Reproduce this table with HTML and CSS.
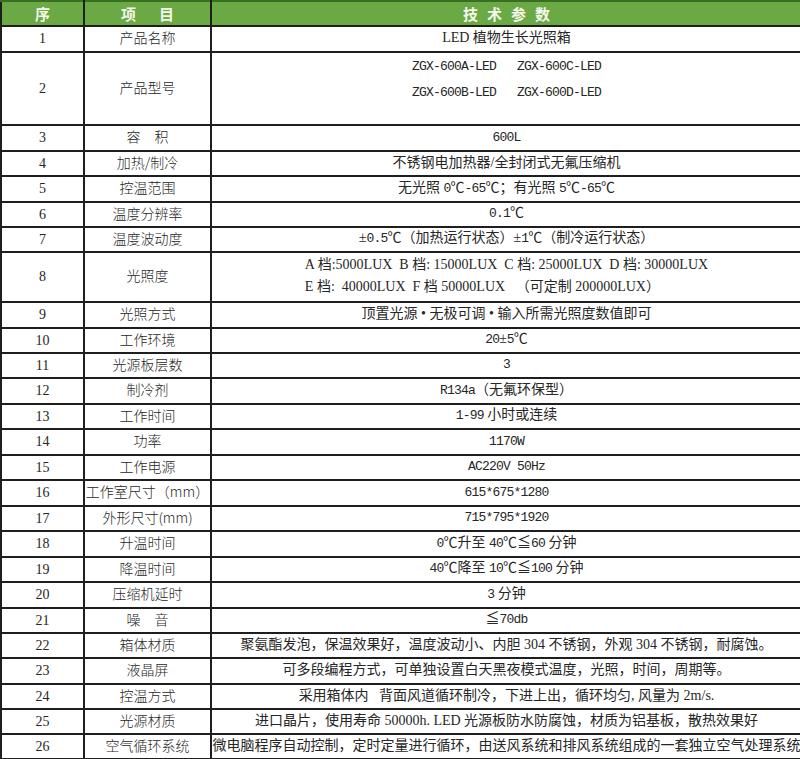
FILE: index.html
```html
<!DOCTYPE html>
<html lang="zh-CN">
<head>
<meta charset="utf-8">
<title>技术参数</title>
<link rel="stylesheet" href="styles.css">
</head>
<body>
<table class="spec">
  <colgroup>
    <col class="c-no">
    <col class="c-item">
    <col class="c-val">
  </colgroup>
  <thead>
    <tr class="h25">
      <th>序</th>
      <th class="item-h">项　目</th>
      <th class="wide">技术参数</th>
    </tr>
  </thead>
  <tbody>
    <tr class="h26"><td>1</td><td>产品名称</td><td>LED 植物生长光照箱</td></tr>
    <tr class="h73"><td>2</td><td>产品型号</td><td class="top"><span class="mono pre">ZGX-600A-LED   ZGX-600C-LED</span><br><span class="mono pre">ZGX-600B-LED   ZGX-600D-LED</span></td></tr>
    <tr class="h26"><td>3</td><td>容　积</td><td><span class="mono">600L</span></td></tr>
    <tr class="h25"><td>4</td><td>加热/制冷</td><td>不锈钢电加热器/全封闭式无氟压缩机</td></tr>
    <tr class="h26"><td>5</td><td>控温范围</td><td>无光照 <span class="mono">0</span>℃<span class="mono">-65</span>℃；有光照 <span class="mono">5</span>℃<span class="mono">-65</span>℃</td></tr>
    <tr class="h25"><td>6</td><td>温度分辨率</td><td><span class="mono">0.1</span>℃</td></tr>
    <tr class="h25"><td>7</td><td>温度波动度</td><td>±<span class="mono">0.5</span>℃（加热运行状态）±<span class="mono">1</span>℃（制冷运行状态）</td></tr>
    <tr class="h50"><td>8</td><td>光照度</td><td><div class="lux"><div class="pre">A 档:5000LUX  B 档: 15000LUX  C 档: 25000LUX  D 档: 30000LUX</div><div class="pre">E 档:  40000LUX  F 档 50000LUX   （可定制 200000LUX）</div></div></td></tr>
    <tr class="h26"><td>9</td><td>光照方式</td><td>顶置光源 • 无极可调 • 输入所需光照度数值即可</td></tr>
    <tr class="h25"><td>10</td><td>工作环境</td><td><span class="mono">20</span>±<span class="mono">5</span>℃</td></tr>
    <tr class="h25"><td>11</td><td>光源板层数</td><td><span class="mono">3</span></td></tr>
    <tr class="h26"><td>12</td><td>制冷剂</td><td><span class="mono">R134a</span>（无氟环保型）</td></tr>
    <tr class="h25"><td>13</td><td>工作时间</td><td><span class="mono">1-99</span> 小时或连续</td></tr>
    <tr class="h26"><td>14</td><td>功率</td><td><span class="mono">1170W</span></td></tr>
    <tr class="h25"><td>15</td><td>工作电源</td><td><span class="mono">AC220V 50Hz</span></td></tr>
    <tr class="h26"><td>16</td><td>工作室尺寸（mm）</td><td><span class="mono">615*675*1280</span></td></tr>
    <tr class="h25"><td>17</td><td>外形尺寸(mm)</td><td><span class="mono">715*795*1920</span></td></tr>
    <tr class="h26"><td>18</td><td>升温时间</td><td><span class="mono">0</span>℃升至 <span class="mono">40</span>℃≦<span class="mono">60</span> 分钟</td></tr>
    <tr class="h25"><td>19</td><td>降温时间</td><td><span class="mono">40</span>℃降至 <span class="mono">10</span>℃≦<span class="mono">100</span> 分钟</td></tr>
    <tr class="h26"><td>20</td><td>压缩机延时</td><td><span class="mono">3</span> 分钟</td></tr>
    <tr class="h25"><td>21</td><td>噪　音</td><td>≦<span class="mono">70db</span></td></tr>
    <tr class="h25"><td>22</td><td>箱体材质</td><td>聚氨酯发泡，保温效果好，温度波动小、内胆 304 不锈钢，外观 304 不锈钢，耐腐蚀。</td></tr>
    <tr class="h26"><td>23</td><td>液晶屏</td><td>可多段编程方式，可单独设置白天黑夜模式温度，光照，时间，周期等。</td></tr>
    <tr class="h25"><td>24</td><td>控温方式</td><td><span class="pre">采用箱体内   背面风道循环制冷，下进上出，循环均匀, 风量为 2m/s.</span></td></tr>
    <tr class="h25"><td>25</td><td>光源材质</td><td>进口晶片，使用寿命 50000h. LED 光源板防水防腐蚀，材质为铝基板，散热效果好</td></tr>
    <tr class="h25"><td>26</td><td>空气循环系统</td><td>微电脑程序自动控制，定时定量进行循环，由送风系统和排风系统组成的一套独立空气处理系统</td></tr>
  </tbody>
</table>
</body>
</html>
```

FILE: styles.css
```css
html, body {
  margin: 0;
  padding: 0;
  background: #ffffff;
}

body {
  font-family: "Liberation Serif", "Noto Sans CJK SC", serif;
  font-size: 14px;
  color: #262626;
}

.spec {
  width: 800px;
  border-collapse: collapse;
  table-layout: fixed;
}

.c-no { width: 83px; }
.c-item { width: 127px; }
.c-val { width: 590px; }

.spec th,
.spec td {
  padding: 0;
  text-align: center;
  vertical-align: middle;
  line-height: 16px;
  white-space: nowrap;
  overflow: visible;
}

.spec td {
  border: 2px solid #1e1e1e;
}

.spec td:last-child { border-right: none; }

.spec th {
  background: #6aa944;
  color: #f4f8ea;
  font-weight: 700;
  font-size: 15px;
  border-left: 2px solid #1e1e1e;
  border-right: 2px solid #1e1e1e;
  border-top: 2px solid #3a6e22;
  border-bottom: 2px solid #1e1e1e;
  font-family: "Noto Sans CJK SC", sans-serif;
}

.spec th:last-child { border-right: none; }

.spec th.item-h {
  letter-spacing: 4px;
  padding-left: 4px;
}

.spec th.wide {
  letter-spacing: 9px;
  padding-left: 9px;
}

.spec td:nth-child(2) {
  font-family: "Noto Sans CJK SC", "Liberation Serif", sans-serif;
  font-weight: 300;
  padding-bottom: 4px;
}

.spec td:nth-child(3) {
  font-family: "Liberation Serif", "Noto Sans CJK SC", serif;
  padding-bottom: 2px;
}

.h25 { height: 25px; }
.h26 { height: 26px; }
.h50 { height: 50px; }
.h73 { height: 73px; }

.spec td.top {
  vertical-align: top;
  line-height: 25px;
  padding-bottom: 0;
}

.mono {
  font-family: "Liberation Mono", "Noto Sans CJK SC", monospace;
  font-size: 13px;
  letter-spacing: -0.8px;
}

.pre { white-space: pre; }

.lux {
  display: inline-block;
  text-align: left;
  line-height: 22px;
}
```
